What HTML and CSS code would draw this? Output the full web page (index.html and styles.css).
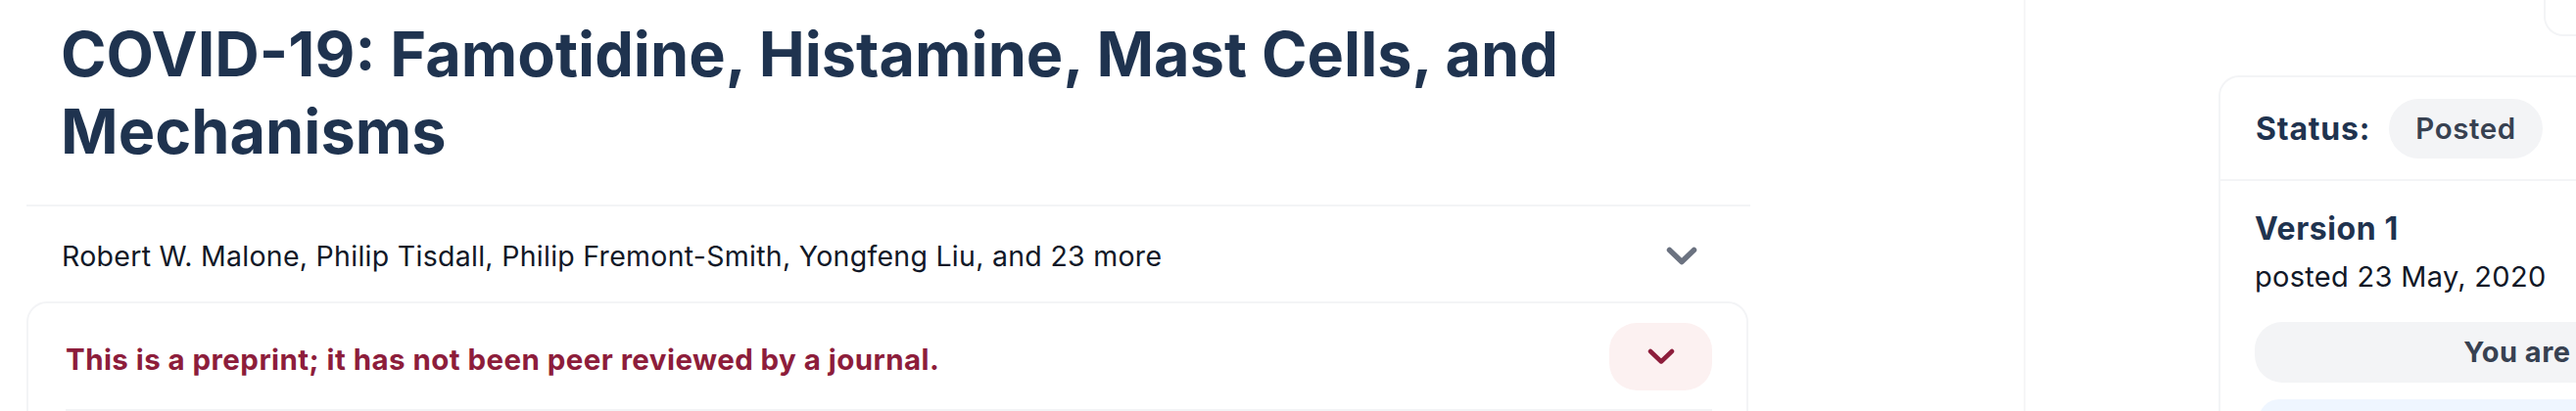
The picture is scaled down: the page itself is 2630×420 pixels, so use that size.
FILE: index.html
```html
<!DOCTYPE html>
<html lang="en">
<head>
    <meta charset="UTF-8">
    <title>COVID-19: Famotidine, Histamine, Mast Cells, and Mechanisms</title>
    <link rel="stylesheet" href="styles.css">
</head>
<body>
<div class="page">
    <main class="article">
        <h1 class="title">COVID-19: Famotidine, Histamine, Mast Cells, and Mechanisms</h1>

        <!-- authors -->
        <div class="authors">
            <span>Robert W. Malone, Philip Tisdall, Philip Fremont-Smith, Yongfeng Liu, and 23 more</span>
            <svg class="chev-gray" width="32" height="20" viewBox="0 0 32 20"><polyline points="3.5,3.5 16,15.5 28.5,3.5"/></svg>
        </div>

        <!-- preprint notice -->
        <div class="notice">
            <div class="notice-head">
                <span class="notice-text">This is a preprint; it has not been peer reviewed by a journal.</span>
                <button class="notice-btn">
                    <svg class="chev-red" width="28" height="18" viewBox="0 0 28 18"><polyline points="3,3 14,13.5 25,3"/></svg>
                </button>
            </div>
        </div>
    </main>

    <aside class="sidebar">
        <div class="top-card"></div>
        <div class="status-card">
            <div class="status-row">
                <span class="status-label">Status:</span>
                <span class="pill">Posted</span>
            </div>
            <div class="version">
                <div class="version-title">Version 1</div>
                <div class="version-date">posted 23 May, 2020</div>
                <div class="current-btn">You are reading this latest preprint version</div>
                <div class="info-box"></div>
            </div>
        </div>
    </aside>
</div>
</body>
</html>
```

FILE: styles.css
```css
* {
    box-sizing: border-box;
}
body {
    margin: 0;
    font-family: Inter, "Noto Sans", sans-serif;
    color: #111827;
    background-color: #fff;
}
.page {
    display: flex;
    height: 420px;
    overflow: hidden;
}

/* left column */
.article {
    flex: none;
    width: 1760px;
    margin-left: 27px;
}
.title {
    margin: 16px 0 0;
    padding: 0 35px;
    font-size: 63px;
    line-height: 79px;
    font-weight: 700;
    color: #1f334f;
}
.authors {
    display: flex;
    align-items: center;
    justify-content: space-between;
    height: 99px;
    margin-top: 35px;
    padding: 4px 54px 0 36px;
    border-top: 2px solid #f3f4f6;
    font-size: 28.5px;
    line-height: 42px;
    letter-spacing: 0.28px;
}
.chev-gray polyline, .chev-red polyline {
    fill: none;
    stroke-linecap: round;
    stroke-linejoin: round;
}
.chev-gray polyline {
    stroke: #6b7280;
    stroke-width: 5.5;
}
.chev-red polyline {
    stroke: #8d1d3b;
    stroke-width: 4.5;
}
.notice {
    width: 1758px;
    height: 200px;
    padding: 20px 35px 0 38px;
    border: 2px solid #f3f4f6;
    border-radius: 21px;
}
.notice-head {
    display: flex;
    align-items: center;
    justify-content: space-between;
    padding-bottom: 19px;
    border-bottom: 2px solid #f3f4f6;
}
.notice-text {
    font-size: 29.5px;
    line-height: 42px;
    font-weight: 700;
    letter-spacing: 0.44px;
    color: #8d1d3b;
    padding-top: 4px;
}
.notice-btn {
    display: flex;
    align-items: center;
    justify-content: center;
    width: 105px;
    height: 69px;
    border: none;
    border-radius: 28px;
    background-color: #fcf1f1;
    cursor: pointer;
}

/* right column */
.sidebar {
    flex: none;
    width: 2000px;
    margin-left: 279px;
    padding-left: 197px;
    border-left: 2px solid #f6f6f7;
}
.top-card {
    width: 600px;
    height: 37px;
    margin-left: 332px;
    border: 2px solid #f3f4f6;
    border-top: none;
    border-bottom-left-radius: 20px;
}
.status-card {
    width: 1122px;
    margin-top: 40px;
    border: 2px solid #f3f4f6;
    border-radius: 21px;
}
.status-row {
    display: flex;
    align-items: center;
    height: 106px;
    padding: 0 36px;
    border-bottom: 2px solid #f3f4f6;
}
.status-label {
    font-size: 32px;
    font-weight: 700;
    letter-spacing: 0.8px;
    color: #1f334f;
    margin-right: 19px;
}
.pill {
    display: flex;
    align-items: center;
    height: 61px;
    padding: 0 27px;
    border-radius: 31px;
    background-color: #f3f4f6;
    font-size: 29.5px;
    font-weight: 600;
    letter-spacing: 0.6px;
    color: #374151;
}
.version {
    padding: 24px 35px 0;
}
.version-title {
    font-size: 32px;
    line-height: 49px;
    font-weight: 700;
    letter-spacing: 0.6px;
    color: #1f334f;
}
.version-date {
    margin-top: 4px;
    font-size: 29px;
    line-height: 42px;
    letter-spacing: 0.3px;
}
.current-btn {
    margin-top: 25px;
    height: 62px;
    border-radius: 28px;
    background-color: #f3f4f6;
    text-align: center;
    font-size: 29px;
    line-height: 62px;
    font-weight: 700;
    letter-spacing: 0.5px;
    color: #374151;
}
.info-box {
    height: 80px;
    margin: 17px 4px 0;
    border-radius: 21px;
    background-color: #eff6ff;
}
```
